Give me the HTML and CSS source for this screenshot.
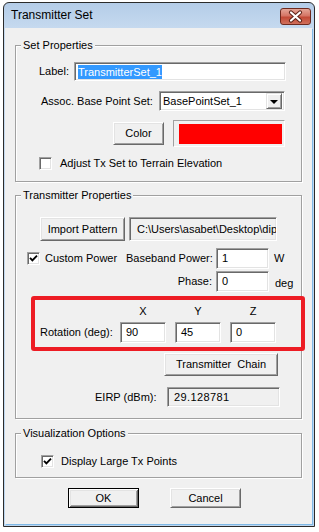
FILE: index.html
```html
<!DOCTYPE html>
<html lang="en">
<head>
    <meta charset="UTF-8">
    <meta name="viewport" content="width=device-width, initial-scale=1.0">
    <title>Transmitter Set</title>
    <link rel="stylesheet" href="styles.css">
</head>
<body>
    <div class="window">
        <div class="titlebar">
            <span class="title">Transmitter Set</span>
            <span class="close-btn">
                <svg width="29" height="15" viewBox="0 0 29 15">
                    <path d="M10 3.5 L19 11.5 M19 3.5 L10 11.5" stroke="#5b2218" stroke-width="4.2" stroke-linecap="round" fill="none"/>
                    <path d="M10 3.5 L19 11.5 M19 3.5 L10 11.5" stroke="#ffffff" stroke-width="2.2" stroke-linecap="round" fill="none"/>
                </svg>
            </span>
        </div>

        <div class="client">
            <div class="group group-set">
                <div class="group-title">Set Properties</div>

                <div class="row row-label">
                    <span class="lbl w-label">Label:</span>
                    <span class="field field-label"><span class="selected">TransmitterSet_1</span></span>
                </div>

                <div class="row row-assoc">
                    <span class="lbl w-assoc">Assoc. Base Point Set:</span>
                    <span class="field combo">
                        <span class="combo-text">BasePointSet_1</span>
                        <span class="combo-btn"><span class="arrow"></span></span>
                    </span>
                </div>

                <div class="row row-color">
                    <span class="btn btn-color">Color</span>
                    <span class="swatch"><span class="swatch-fill"></span></span>
                </div>

                <div class="row row-terrain">
                    <span class="check"></span>
                    <span class="check-text">Adjust Tx Set to Terrain Elevation</span>
                </div>
            </div>

            <div class="group group-tx">
                <div class="group-title">Transmitter Properties</div>

                <div class="row row-import">
                    <span class="btn btn-import">Import Pattern</span>
                    <span class="field field-path readonly">C:\Users\asabet\Desktop\dip</span>
                </div>

                <div class="row row-power">
                    <span class="check checked">
                        <svg width="9" height="9" viewBox="0 0 9 9"><path d="M1 3.8 L3.4 6.3 L8 1.6" stroke="#000" stroke-width="1.9" fill="none"/></svg>
                    </span>
                    <span class="check-text w-custom">Custom Power</span>
                    <span class="lbl w-baseband">Baseband Power:</span>
                    <span class="field field-num">1</span>
                    <span class="unit unit-w">W</span>
                </div>

                <div class="row row-phase">
                    <span class="lbl w-phase">Phase:</span>
                    <span class="field field-num">0</span>
                    <span class="unit unit-deg">deg</span>
                </div>

                <div class="highlight-box">
                    <div class="rot-grid">
                        <span></span>
                        <span class="axis">X</span>
                        <span class="axis">Y</span>
                        <span class="axis">Z</span>
                        <span class="lbl rot-label">Rotation (deg):</span>
                        <span class="field field-rot">90</span>
                        <span class="field field-rot">45</span>
                        <span class="field field-rot">0</span>
                    </div>
                </div>

                <div class="row row-chain">
                    <span class="btn btn-chain">Transmitter&nbsp; Chain</span>
                </div>

                <div class="row row-eirp">
                    <span class="lbl w-eirp">EIRP (dBm):</span>
                    <span class="field field-eirp readonly">29.128781</span>
                </div>
            </div>

            <div class="group group-vis">
                <div class="group-title">Visualization Options</div>

                <div class="row row-large">
                    <span class="check checked">
                        <svg width="9" height="9" viewBox="0 0 9 9"><path d="M1 3.8 L3.4 6.3 L8 1.6" stroke="#000" stroke-width="1.9" fill="none"/></svg>
                    </span>
                    <span class="check-text">Display Large Tx Points</span>
                </div>
            </div>

            <div class="row row-buttons">
                <span class="btn btn-dialog btn-default">OK</span>
                <span class="btn btn-dialog">Cancel</span>
            </div>
        </div>
    </div>
</body>
</html>
```

FILE: styles.css
```css
* {
    box-sizing: border-box;
}
body {
    margin: 0;
    background: #ffffff;
    font-family: "Liberation Sans", Arial, sans-serif;
    font-size: 11px;
    line-height: 13px;
    color: #000;
}
.window {
    width: 312px;
    height: 525px;
    margin: 2px 0 0 3px;
    border: 1px solid #2b2b2b;
    border-radius: 6px 6px 0 0;
    background: linear-gradient(to bottom, #b4cde8 0px, #c6daef 26px, #bcd6ef 100%);
    display: flex;
    flex-direction: column;
}
.titlebar {
    height: 25px;
    display: flex;
    justify-content: space-between;
    align-items: flex-start;
    padding: 0 3px 0 7px;
}
.title {
    font-size: 12px;
    line-height: 15px;
    padding-top: 5px;
}
.close-btn {
    width: 31px;
    height: 17px;
    margin-top: 5px;
    border: 1px solid #6e2a1f;
    border-radius: 3px;
    background: linear-gradient(to bottom, #e4a597 0%, #d57565 45%, #c24a37 55%, #d0705c 100%);
    display: flex;
    align-items: center;
    justify-content: center;
}
.client {
    flex: 1;
    margin: 0 2px 2px 1px;
    background: #f0f0f0;
    box-shadow: 1px 1px 0 #7fb8e6;
    display: flex;
    flex-direction: column;
}

/* group boxes */
.group {
    width: 287px;
    margin-left: 10px;
    border: 1px solid #a0a0a0;
    box-shadow: inset 1px 1px 0 #fff, 1px 1px 0 #fff;
}
.group-set {
    margin-top: 17px;
    padding-bottom: 11px;
}
.group-tx {
    margin-top: 13px;
    padding-bottom: 11px;
}
.group-vis {
    margin-top: 14px;
    padding-bottom: 9px;
}
.group-title {
    width: max-content;
    margin: -7px 0 0 5px;
    padding: 0 2px;
    background: #f0f0f0;
}

.row {
    display: flex;
    align-items: center;
}
.lbl {
    white-space: nowrap;
}

/* sunken edit fields */
.field {
    display: flex;
    align-items: center;
    background: #fff;
    border: 1px solid;
    border-color: #a0a0a0 #fff #fff #a0a0a0;
    box-shadow: inset 1px 1px 0 #696969, inset -1px -1px 0 #e3e3e3;
    padding-left: 5px;
    white-space: nowrap;
    overflow: hidden;
}
.field.readonly {
    background: #f0f0f0;
}

/* raised buttons */
.btn {
    display: flex;
    align-items: center;
    justify-content: center;
    background: #f0f0f0;
    border: 1px solid;
    border-color: #fff #696969 #696969 #fff;
    box-shadow: inset 1px 1px 0 #e3e3e3, inset -1px -1px 0 #a0a0a0;
    white-space: nowrap;
}
.btn-default {
    border-color: #000;
    box-shadow: inset 1px 1px 0 #fff, inset -1px -1px 0 #696969, inset 2px 2px 0 #e3e3e3, inset -2px -2px 0 #a0a0a0;
}

/* check boxes */
.check {
    width: 13px;
    height: 13px;
    flex: none;
    background: #fff;
    border: 1px solid;
    border-color: #a0a0a0 #fff #fff #a0a0a0;
    box-shadow: inset 1px 1px 0 #696969, inset -1px -1px 0 #e3e3e3;
    display: flex;
    align-items: center;
    justify-content: center;
}
.check svg {
    display: block;
}

/* Set Properties */
.row-label {
    margin: 10px 0 0 23px;
    height: 19px;
}
.w-label {
    width: 35px;
}
.field-label {
    width: 212px;
    height: 19px;
    padding-left: 3px;
}
.selected {
    background: #3399ff;
    color: #fff;
    line-height: 14px;
}
.row-assoc {
    margin: 10px 0 0 25px;
}
.w-assoc {
    width: 118px;
}
.combo {
    width: 126px;
    height: 20px;
    padding-left: 3px;
    justify-content: space-between;
}
.combo-btn {
    width: 16px;
    height: 16px;
    margin-right: 2px;
    background: #f0f0f0;
    border: 1px solid;
    border-color: #e3e3e3 #696969 #696969 #e3e3e3;
    box-shadow: inset 1px 1px 0 #fff, inset -1px -1px 0 #a0a0a0;
    display: flex;
    align-items: center;
    justify-content: center;
}
.arrow {
    width: 0;
    height: 0;
    border-left: 4px solid transparent;
    border-right: 4px solid transparent;
    border-top: 4px solid #000;
    margin-top: 1px;
}
.row-color {
    margin: 9px 0 0 97px;
    height: 27px;
}
.btn-color {
    width: 51px;
    height: 23px;
}
.swatch {
    width: 112px;
    height: 27px;
    margin-left: 9px;
    border: 1px solid;
    border-color: #a0a0a0 #fff #fff #a0a0a0;
    padding: 3px 2px 2px 5px;
}
.swatch-fill {
    display: block;
    width: 100%;
    height: 100%;
    background: #ff0000;
}
.row-terrain {
    margin: 10px 0 0 23px;
}
.row-terrain .check-text {
    margin-left: 8px;
}

/* Transmitter Properties */
.row-import {
    margin: 15px 0 0 24px;
    height: 24px;
}
.btn-import {
    width: 85px;
    height: 24px;
}
.field-path {
    width: 148px;
    height: 24px;
    margin-left: 4px;
    padding-left: 7px;
}
.row-power {
    margin: 7px 0 0 11px;
    height: 21px;
}
.w-custom {
    width: 81px;
    margin-left: 5px;
}
.w-baseband {
    width: 86px;
    margin-right: 4px;
}
.field-num {
    width: 53px;
    height: 21px;
}
.unit-w {
    margin-left: 5px;
}
.row-phase {
    margin-top: 2px;
    height: 21px;
}
.w-phase {
    width: 196px;
    margin-right: 4px;
    text-align: right;
}
.unit-deg {
    margin-left: 6px;
    margin-top: 3px;
}
.highlight-box {
    width: 274px;
    margin: 4px 0 0 15px;
    border: 4px solid #ed1c24;
    border-radius: 3px;
    padding: 5px 0 4px 0;
}
.rot-grid {
    display: grid;
    grid-template-columns: 85px 55px 55px 46px;
    row-gap: 4px;
    align-items: center;
}
.axis {
    width: 46px;
    text-align: center;
}
.rot-label {
    padding-left: 5px;
}
.field-rot {
    width: 46px;
    height: 21px;
}
.row-chain {
    margin: 2px 0 0 148px;
}
.btn-chain {
    width: 114px;
    height: 23px;
}
.row-eirp {
    margin: 11px 0 0 79px;
}
.w-eirp {
    width: 72px;
}
.field-eirp {
    width: 113px;
    height: 20px;
    padding-left: 6px;
    letter-spacing: 0.4px;
}

/* Visualization Options */
.row-large {
    margin: 15px 0 0 25px;
}
.row-large .check-text {
    margin-left: 7px;
}

/* dialog buttons */
.row-buttons {
    margin: 10px 0 0 63px;
    gap: 31px;
}
.btn-dialog {
    width: 71px;
    height: 20px;
}
```
